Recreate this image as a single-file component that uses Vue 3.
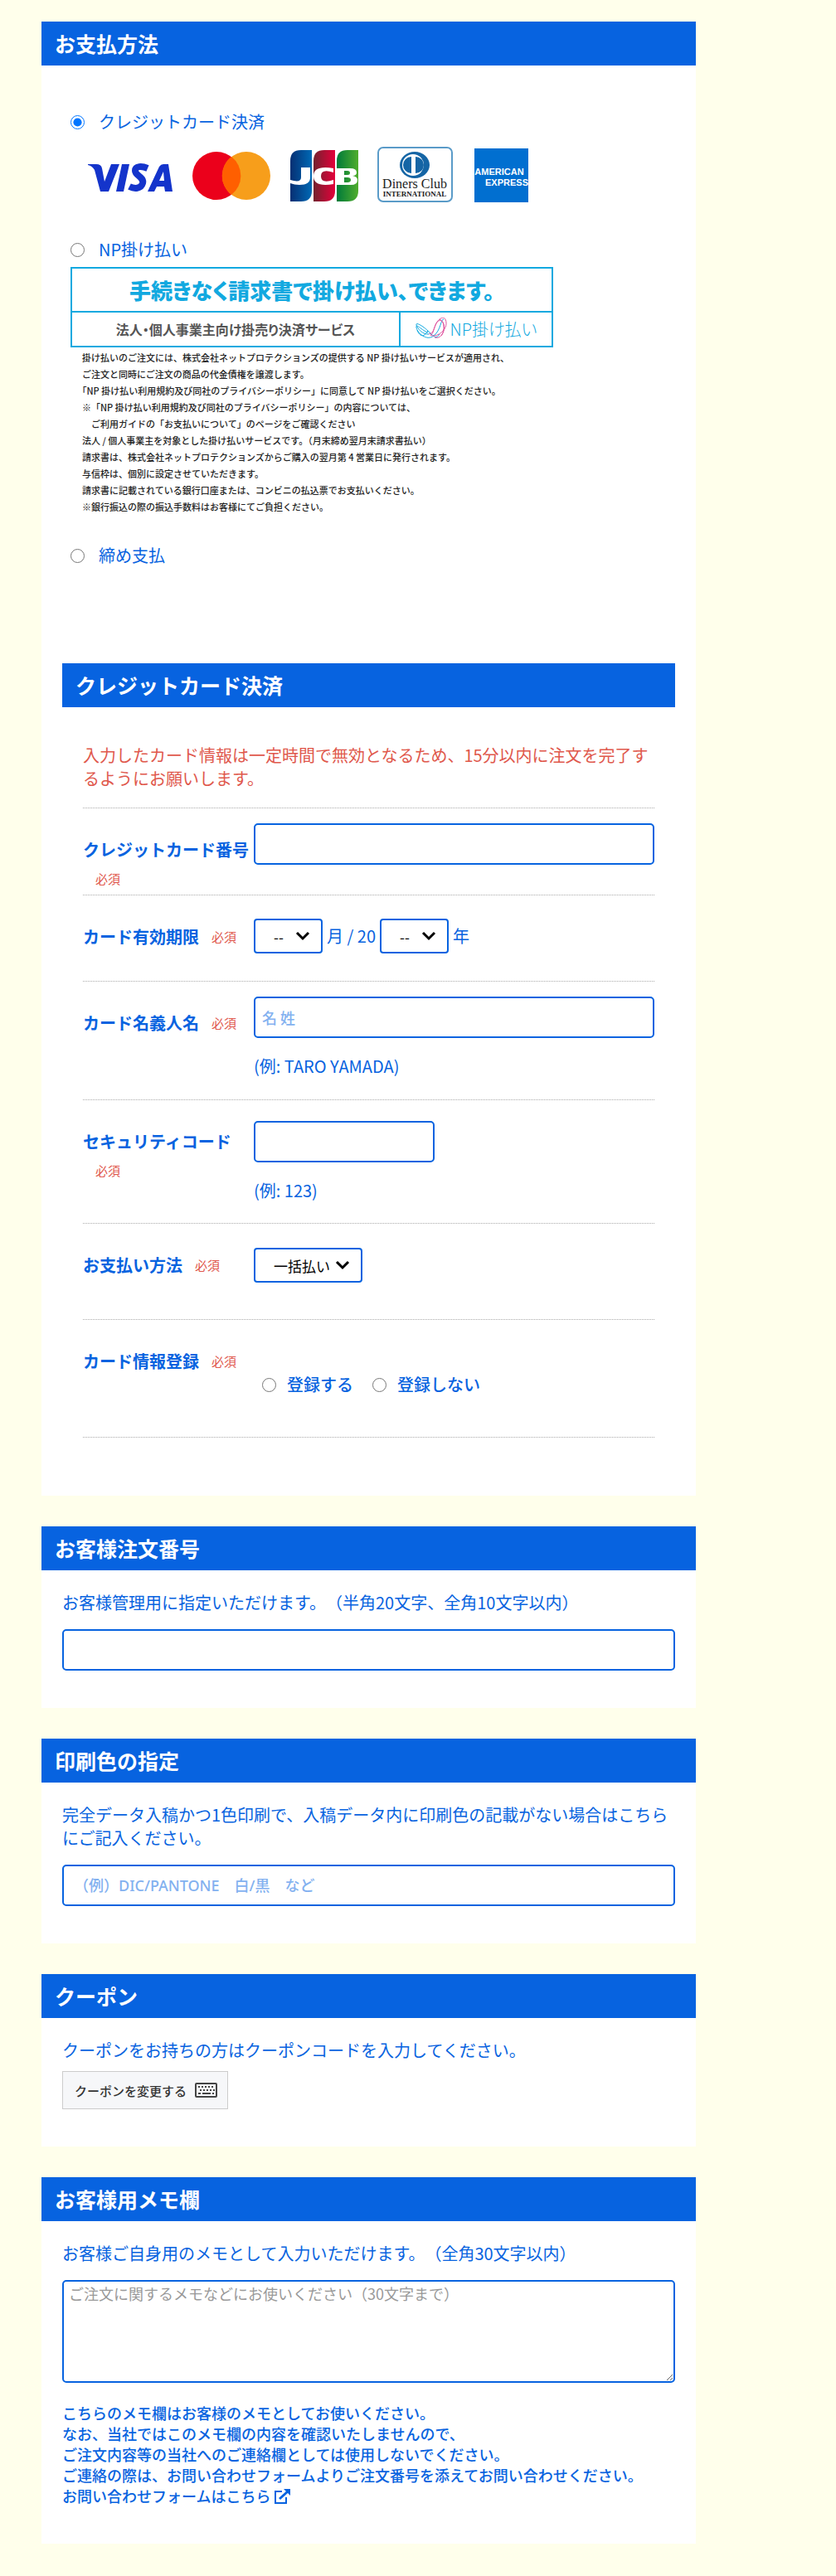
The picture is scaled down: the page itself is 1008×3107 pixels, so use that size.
<template>
	<main class="page">
		<section class="panel">
			<h2 class="panel-title">お支払方法</h2>
			<div class="methods">
				<div class="method">
					<input id="pay-credit" v-model="payment" type="radio" name="payment" value="credit" />
					<label for="pay-credit">クレジットカード決済</label>
				</div>
				<svg class="brands" viewBox="0 0 532 68" role="img" aria-label="VISA Mastercard JCB Diners Club American Express">
					<defs>
						<linearGradient id="jcb-blue"><stop offset="0" stop-color="#062f73" /><stop offset="1" stop-color="#0069b5" /></linearGradient>
						<linearGradient id="jcb-red"><stop offset="0" stop-color="#73222f" /><stop offset="1" stop-color="#e4003a" /></linearGradient>
						<linearGradient id="jcb-green"><stop offset="0" stop-color="#007a3a" /><stop offset="1" stop-color="#50ad2d" /></linearGradient>
					</defs>
					<!-- VISA -->
					<g fill="#1434cb">
						<path d="M1 21h10q6 0 7 5l3 16 8-21h10L26 54H16L9 28q-3-5-8-6z" />
						<path d="M42 21h9l-7 33h-9z" />
						<path d="M73 26C66 23 58 23 58 29C58 35 69 36 67 44C65 51 57 51 51 48" fill="none" stroke="#1434cb" stroke-width="8" />
						<path d="M73 54l14-30q2-3 5-3h6l5 33h-9l-1-6H84l-3 6zM87 41h6l-1-11z" fill-rule="evenodd" />
					</g>
					<!-- Mastercard -->
					<circle cx="156" cy="35" r="29" fill="#eb001b" />
					<circle cx="192" cy="35" r="29" fill="#f79e1b" />
					<path d="M174 12a29 29 0 0 1 0 46a29 29 0 0 1 0-46z" fill="#ff5f00" />
					<!-- JCB -->
					<path d="M245 17q0-13 13-13h13v49q0 13-13 13h-13z" fill="url(#jcb-blue)" />
					<path d="M273 17q0-13 13-13h13v49q0 13-13 13h-13z" fill="url(#jcb-red)" />
					<path d="M301 17q0-13 13-13h13v49q0 13-13 13h-13z" fill="url(#jcb-green)" />
					<path d="M258 25h11v12q0 9-13 9q-6 0-11-2v-4q13 4 13-3z" fill="#fff" />
					<path d="M297 26v5q-15-5-15 4.500t15 4.500v5q-24 4-24-9.500t24-9.500z" fill="#fff" />
					<path d="M301 26h16q8 0 8 5 0 4-5 4 6 1 6 5 0 6-8 6h-17zm9 3v5h4q3 0 3-2.500t-3-2.500zm0 8v6h4q4 0 4-3t-4-3z" fill="#fff" fill-rule="evenodd" />
					<!-- Diners Club -->
					<rect x="351" y="1" width="89" height="65" rx="6" fill="#fff" stroke="#5a9bc8" stroke-width="2" />
					<ellipse cx="395" cy="22" rx="18" ry="16" fill="#1565a5" />
					<circle cx="393" cy="22" r="13" fill="#fff" />
					<path d="M391 12a10 10 0 0 0 0 20zM396 12a10 10 0 0 1 0 20z" fill="#1565a5" />
					<text class="diners-name" x="395" y="50" text-anchor="middle">Diners Club</text>
					<text class="diners-sub" x="395" y="60" text-anchor="middle">INTERNATIONAL</text>
					<!-- American Express -->
					<rect x="467" y="2" width="65" height="65" fill="#016fd0" />
					<text class="amex-text" x="497" y="34" text-anchor="middle">AMERICAN</text>
					<text class="amex-text" x="532" y="47" text-anchor="end">EXPRESS</text>
				</svg>

				<div class="method">
					<input id="pay-np" v-model="payment" type="radio" name="payment" value="np" />
					<label for="pay-np">NP掛け払い</label>
				</div>
				<div class="np-banner">
					<p class="np-lead">手続きなく請求書で掛け払い、できます。</p>
					<p class="np-target">法人・個人事業主向け掛売り決済サービス</p>
					<p class="np-logo">
						<svg viewBox="0 0 38 28" fill="none" aria-hidden="true">
							<g stroke="#12a9e0">
								<path d="M15 18C8 16 0 6 1 12s12 17 21 10S30 2 34 2" />
								<path d="M16 20C9 21 2 13 1 9s8 1 15 8 9 9 13 3" />
								<path d="M15 16C9 26 4 21 2 15" />
							</g>
							<g stroke="#e0559f">
								<path d="M18 21C24 25 38 16 37 6s-9-5-12 1-3 12-9 13" />
								<path d="M23 24c7 2 12-5 11-14S27 2 24 9s-2 10-6 12" />
								<path d="M29 2c6 3 8 12 2 20" />
							</g>
						</svg>
						NP掛け払い
					</p>
				</div>
				<div class="np-notes">
					<p v-for="note in npNotes" :key="note" :class="{ indent: note.startsWith('ご利用ガイド') }">{{ note }}</p>
				</div>

				<div class="method">
					<input id="pay-closing" v-model="payment" type="radio" name="payment" value="closing" />
					<label for="pay-closing">締め支払</label>
				</div>
			</div>

			<div class="credit">
				<h2 class="panel-title">クレジットカード決済</h2>
				<div class="credit-form">
					<p class="alert">入力したカード情報は一定時間で無効となるため、15分以内に注文を完了するようにお願いします。</p>

					<div class="row row-number">
						<div class="row-head"><label for="card-number">クレジットカード番号</label> <span class="required">必須</span></div>
						<div class="row-body">
							<input id="card-number" class="text-box" type="text" />
						</div>
					</div>

					<div class="row row-select">
						<div class="row-head"><label for="card-month">カード有効期限</label><span class="required">必須</span></div>
						<div class="row-body expiry">
							<span class="select-wrap">
								<select id="card-month"><option>--</option><option v-for="m in 12" :key="m">{{ m }}</option></select>
								<svg viewBox="0 0 18 12" aria-hidden="true"><path d="M2 2l7 7 7-7" /></svg>
							</span>
							<span>月 / 20</span>
							<span class="select-wrap">
								<select aria-label="年"><option>--</option><option v-for="y in years" :key="y">{{ y }}</option></select>
								<svg viewBox="0 0 18 12" aria-hidden="true"><path d="M2 2l7 7 7-7" /></svg>
							</span>
							<span>年</span>
						</div>
					</div>

					<div class="row row-hint">
						<div class="row-head"><label for="card-name">カード名義人名</label><span class="required">必須</span></div>
						<div class="row-body">
							<input id="card-name" class="text-box" type="text" placeholder="名 姓" />
							<p class="hint">(例: TARO YAMADA)</p>
						</div>
					</div>

					<div class="row row-code">
						<div class="row-head"><label for="card-code">セキュリティコード</label> <span class="required">必須</span></div>
						<div class="row-body">
							<input id="card-code" class="text-box short" type="text" />
							<p class="hint">(例: 123)</p>
						</div>
					</div>

					<div class="row row-times">
						<div class="row-head"><label for="card-times">お支払い方法</label><span class="required">必須</span></div>
						<div class="row-body">
							<span class="select-wrap wide">
								<select id="card-times"><option>一括払い</option></select>
								<svg viewBox="0 0 18 12" aria-hidden="true"><path d="M2 2l7 7 7-7" /></svg>
							</span>
						</div>
					</div>

					<div class="row row-save">
						<div class="row-head">カード情報登録<span class="required">必須</span></div>
						<div class="row-body save-options">
							<input id="save-yes" type="radio" name="save" value="yes" />
							<label for="save-yes">登録する</label>
							<input id="save-no" type="radio" name="save" value="no" />
							<label for="save-no">登録しない</label>
						</div>
					</div>
				</div>
			</div>
		</section>

		<section class="panel">
			<h2 class="panel-title">お客様注文番号</h2>
			<div class="panel-body">
				<label for="order-number">お客様管理用に指定いただけます。（半角20文字、全角10文字以内）</label>
				<input id="order-number" class="text-box" type="text" />
			</div>
		</section>

		<section class="panel">
			<h2 class="panel-title">印刷色の指定</h2>
			<div class="panel-body">
				<label for="print-color">完全データ入稿かつ1色印刷で、入稿データ内に印刷色の記載がない場合はこちらにご記入ください。</label>
				<input id="print-color" class="text-box color-box" type="text" placeholder="（例）DIC/PANTONE　白/黒　など" />
			</div>
		</section>

		<section class="panel">
			<h2 class="panel-title">クーポン</h2>
			<div class="panel-body coupon">
				<p>クーポンをお持ちの方はクーポンコードを入力してください。</p>
				<button type="button" class="coupon-button">
					クーポンを変更する
					<svg viewBox="0 0 27 18" fill="none" stroke="#444" stroke-width="2" aria-hidden="true">
						<rect x="1" y="1" width="25" height="16" rx="1" />
						<path d="M4 5h20M6 9h18" stroke-dasharray="2 2" />
						<path d="M4 13h3M9 13h10M21 13h2" />
					</svg>
				</button>
			</div>
		</section>

		<section class="panel">
			<h2 class="panel-title">お客様用メモ欄</h2>
			<div class="panel-body">
				<label for="memo">お客様ご自身用のメモとして入力いただけます。（全角30文字以内）</label>
				<textarea id="memo" placeholder="ご注文に関するメモなどにお使いください（30文字まで）"></textarea>
				<p class="memo-note">
					こちらのメモ欄はお客様のメモとしてお使いください。<br />
					なお、当社ではこのメモ欄の内容を確認いたしませんので、<br />
					ご注文内容等の当社へのご連絡欄としては使用しないでください。<br />
					ご連絡の際は、お問い合わせフォームよりご注文番号を添えてお問い合わせください。<br />
					<a href="#">お問い合わせフォームはこちら<svg viewBox="0 0 20 18" fill="none" stroke="currentColor" stroke-width="2" aria-hidden="true"><path d="M10 3H2v14h13v-7" /><path d="M7 12L17 3" stroke-width="3" /><path d="M12 0h8v8z" fill="currentColor" stroke="none" /></svg></a>
				</p>
			</div>
		</section>
	</main>
</template>

<script setup>
import { ref } from 'vue'

const payment = ref('credit')
const years = Array.from({ length: 10 }, (_, i) => 25 + i)

const npNotes = [
	'掛け払いのご注文には、株式会社ネットプロテクションズの提供する NP 掛け払いサービスが適用され、',
	'ご注文と同時にご注文の商品の代金債権を譲渡します。',
	'「NP 掛け払い利用規約及び同社のプライバシーポリシー」に同意して NP 掛け払いをご選択ください。',
	'※「NP 掛け払い利用規約及び同社のプライバシーポリシー」の内容については、',
	'ご利用ガイドの「お支払いについて」のページをご確認ください',
	'法人 / 個人事業主を対象とした掛け払いサービスです。（月末締め翌月末請求書払い）',
	'請求書は、株式会社ネットプロテクションズからご購入の翌月第 4 営業日に発行されます。',
	'与信枠は、個別に設定させていただきます。',
	'請求書に記載されている銀行口座または、コンビニの払込票でお支払いください。',
	'※銀行振込の際の振込手数料はお客様にてご負担ください。',
]
</script>

<style>
body {
	background: #ffffeb;
}
</style>

<style scoped>
.page {
	max-width: 789px;
	margin: 0 auto 0 50px;
	padding: 26px 0 39px;
	display: flex;
	flex-direction: column;
	gap: 37px;
	color: #0763e0;
	font-family: 'Noto Sans CJK JP', sans-serif;
	font-size: 20px;
	line-height: 28px;
	text-spacing-trim: space-all;
}

.page *,
.page {
	box-sizing: border-box;
}

p,
h2 {
	margin: 0;
}

input,
select,
textarea,
button {
	margin: 0;
	font-family: inherit;
	font-weight: inherit;
}

.panel {
	background: #fff;
}

.panel-title {
	padding: 10px 16px;
	background: #0763e0;
	color: #fff;
	font-size: 25px;
	font-weight: 700;
	line-height: 33px;
}

.panel-body {
	display: flex;
	flex-direction: column;
	align-items: flex-start;
	gap: 18px;
	padding: 25px 25px 45px;
}

/* 支払方法の選択 */
.methods {
	padding: 54px 35px 0;
}

.method {
	display: flex;
	align-items: center;
	gap: 17px;
}

input[type='radio'] {
	width: 17px;
	height: 17px;
	accent-color: #0075ff;
}

.brands {
	display: block;
	width: 532px;
	max-width: 100%;
	margin: 16px 0 42px 20px;
}

.diners-name {
	font: 16px 'Liberation Serif', serif;
	fill: #222;
}

.diners-sub {
	font: bold 9px 'Liberation Serif', serif;
	fill: #222;
}

.amex-text {
	font: bold 11px 'Liberation Sans', sans-serif;
	fill: #fff;
}

.np-banner {
	display: grid;
	grid-template-columns: 396px 1fr;
	max-width: 582px;
	margin-top: 7px;
	border: 2px solid #12a9e0;
	font-feature-settings: 'palt';
	text-align: center;
}

.np-lead {
	grid-column: 1 / -1;
	border-bottom: 2px solid #12a9e0;
	color: #12a9e0;
	font-size: 26px;
	font-weight: 900;
	line-height: 51px;
}

.np-target {
	border-right: 2px solid #12a9e0;
	color: #555;
	font-size: 16px;
	font-weight: 700;
	line-height: 40px;
}

.np-logo {
	display: flex;
	align-items: center;
	justify-content: center;
	gap: 4px;
	color: #12a9e0;
	font-weight: 300;
}

.np-logo svg {
	width: 38px;
	height: 28px;
}

.np-notes {
	margin: 2px 0 35px 14px;
	color: #222;
	font-size: 11px;
	font-weight: 500;
	line-height: 20px;
	text-spacing-trim: trim-start;
}

.indent {
	padding-left: 11px;
}

/* カード情報の入力 */
.credit {
	padding: 116px 25px 70px;
}

.credit-form {
	padding: 44px 25px 0;
}

.alert {
	padding-bottom: 21px;
	border-bottom: 1px dotted #aaa;
	color: #e0584c;
}

.row {
	display: grid;
	grid-template-columns: 206px 1fr;
	min-height: 104px;
	padding-top: 18px;
	border-bottom: 1px dotted #aaa;
}

.row-number {
	min-height: 105px;
}

.row-head {
	padding-top: 14px;
	font-weight: 700;
	line-height: 35px;
}

.required {
	display: inline-block;
	margin-left: 15px;
	color: #e0584c;
	font-size: 15px;
	font-weight: 400;
	line-height: 20px;
	vertical-align: 2px;
}

.text-box {
	display: block;
	width: 100%;
	height: 50px;
	padding: 0 8px;
	border: 2px solid #0763e0;
	border-radius: 5px;
	background: #fff;
	color: #0763e0;
	font-size: 18px;
	font-weight: 500;
}

.text-box::placeholder {
	color: #83b1f0;
	opacity: 1;
}

.short {
	width: 218px;
}

.hint {
	margin-top: 20px;
}

.select-wrap {
	position: relative;
	display: inline-block;
	width: 83px;
}

.wide {
	width: 131px;
}

select {
	display: block;
	width: 100%;
	height: 42px;
	padding: 0 0 0 22px;
	border: 2px solid #0763e0;
	border-radius: 4px;
	background: #fff;
	color: #000;
	font-size: 17px;
	appearance: none;
}

.select-wrap svg {
	position: absolute;
	top: 15px;
	right: 15px;
	width: 18px;
	height: 12px;
	fill: none;
	stroke: #000;
	stroke-width: 3;
	pointer-events: none;
}

.row-select .row-body {
	padding-top: 10px;
}

.expiry {
	display: flex;
	align-items: center;
	align-self: start;
	gap: 5px;
}

.row-hint {
	min-height: 143px;
}

.row-code {
	min-height: 149px;
}

.row-code .row-body {
	padding-top: 7px;
}

.row-times {
	min-height: 116px;
}

.row-times .row-body {
	padding-top: 11px;
}

.row-save {
	min-height: 142px;
}

.save-options {
	display: flex;
	align-items: center;
	align-self: start;
	gap: 13px;
	padding: 46px 0 0 10px;
	font-weight: 500;
}

.save-options label + input {
	margin-left: 10px;
}

/* クーポン・メモ欄 */
.color-box {
	padding: 0 12px;
	font-family: 'Noto Sans', 'Noto Sans CJK JP', sans-serif;
}

.coupon {
	gap: 11px;
}

.coupon-button {
	display: flex;
	align-items: center;
	gap: 10px;
	height: 46px;
	padding: 0 12px 0 14px;
	border: 1px solid #ccc;
	background: #f6f7f9;
	color: #333;
	font-size: 15px;
	font-weight: 500;
}

.coupon-button svg {
	width: 27px;
	height: 18px;
}

textarea {
	display: block;
	width: 100%;
	height: 124px;
	padding: 2px 6px;
	border: 2px solid #0763e0;
	border-radius: 5px;
	background: #fff;
	font-size: 18px;
	line-height: 25px;
}

textarea::placeholder {
	color: #999;
}

.memo-note {
	margin-top: 6px;
	font-size: 18px;
	font-weight: 500;
	line-height: 25px;
}

.memo-note a {
	color: inherit;
	text-decoration: none;
}

.memo-note svg {
	width: 20px;
	height: 18px;
	margin-left: 4px;
	vertical-align: -2px;
}
</style>
